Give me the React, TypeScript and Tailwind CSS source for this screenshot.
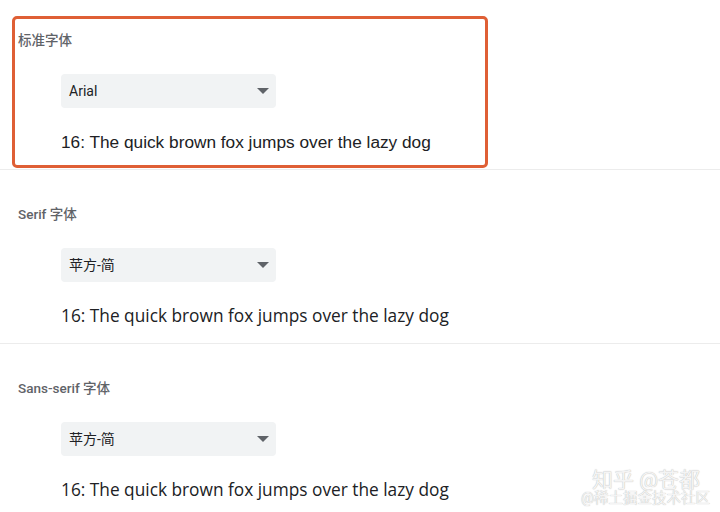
import React from 'react';

const sections = [
  { label: '标准字体', value: 'Arial', sampleFont: "font-['Liberation_Sans',Arial,sans-serif] text-[17.25px]" },
  { label: 'Serif 字体', value: '苹方-简', sampleFont: "font-['Open_Sans','Noto_Sans_CJK_SC',sans-serif] text-[17.3px]" },
  { label: 'Sans-serif 字体', value: '苹方-简', sampleFont: "font-['Open_Sans','Noto_Sans_CJK_SC',sans-serif] text-[17.3px]" },
];

const FontSelect = ({ value }: { value: string }) => (
  <div className="ml-[61px] flex h-[34px] w-[215px] items-center justify-between rounded bg-[#f1f3f4] pl-2 pr-[7px]">
    <span className="text-[14px] text-[#202124]">{value}</span>
    <svg width="12" height="6" viewBox="0 0 12 6" className="fill-[#5f6368]">
      <path d="M0 0h12L6 6z" />
    </svg>
  </div>
);

const App = () => {
  return (
    <div className="relative h-[512px] w-[720px] overflow-hidden bg-white font-['Roboto','Noto_Sans_CJK_SC',sans-serif]">
      {sections.map((s, i) => (
        <div
          key={s.label}
          className={`relative border-b border-[#ececec] ${i === 0 ? 'h-[170px] pt-[30px]' : 'h-[174px] pt-[34px]'}`}
        >
          {i === 0 && (
            <div className="pointer-events-none absolute left-[12px] top-[16px] h-[152px] w-[476px] rounded-[5px] border-[3px] border-[#df5f35]" />
          )}
          <div className="pl-[18px] text-[13.5px] leading-[20px] font-medium text-[#5f6368]">{s.label}</div>
          <div className="mt-[24px]">
            <FontSelect value={s.value} />
          </div>
          <div className={`ml-[61px] mt-[23px] leading-[22px] text-[#202124] ${s.sampleFont}`}>
            16: The quick brown fox jumps over the lazy dog
          </div>
        </div>
      ))}
      <div className="absolute bottom-[4px] right-[10px] flex flex-col items-end text-[#f4f4f4] [text-shadow:0_0_1px_#a8a8a8]">
        <div className="pr-[10px] text-[21px] leading-[19px]">知乎 @苍都</div>
        <div className="text-[14.5px] leading-[18px]">@稀土掘金技术社区</div>
      </div>
    </div>
  );
};

export default App;
